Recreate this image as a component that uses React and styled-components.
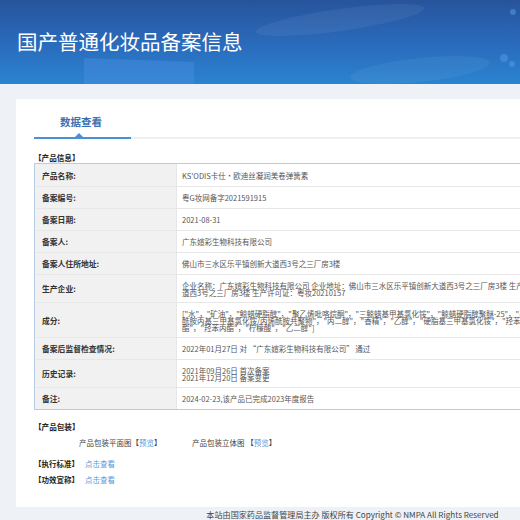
import React from "react";
import styled, { createGlobalStyle } from "styled-components";

const GlobalStyle = createGlobalStyle`
  html, body {
    margin: 0;
    padding: 0;
    overflow: hidden;
    background: #eef2f6;
  }
  body {
    font-family: "Noto Sans CJK SC", "Noto Sans", sans-serif;
  }
`;

const Page = styled.div`
  width: 705px;
  background: #eef2f6;
`;

const Banner = styled.header`
  position: relative;
  height: 84px;
  background: linear-gradient(180deg, #27549c 0%, #2a6cbd 55%, #2a84d0 100%);
  overflow: hidden;
`;

const BannerDecor = styled.svg`
  position: absolute;
  left: 0;
  top: 0;
`;

const Title = styled.h1`
  position: relative;
  margin: 0;
  padding: 29px 0 0 17px;
  font-size: 20.5px;
  line-height: 24px;
  font-weight: 400;
  color: #ffffff;
`;

const Main = styled.main`
  padding: 15px 16px 0 16px;
`;

const Card = styled.section`
  background: #ffffff;
  padding: 0 0 22px 18px;
  overflow: hidden;
`;

const TabBar = styled.div`
  display: flex;
  height: 38px;
  border-bottom: 2px solid #eef0f3;
`;

const Tab = styled.div`
  position: relative;
  width: 97px;
  box-sizing: border-box;
  padding-left: 26px;
  display: flex;
  align-items: center;
  padding-top: 6px;
  margin-bottom: -2px;
  border-bottom: 2px solid #4b8fd6;
  font-size: 10.5px;
  font-weight: 700;
  color: #3f6fae;

  &::after {
    content: "";
    position: absolute;
    left: 41px;
    bottom: 0;
    border-left: 4px solid transparent;
    border-right: 4px solid transparent;
    border-bottom: 4px solid #4b8fd6;
  }
`;

const SectionTitle = styled.div`
  margin-top: ${p => p.$top}px;
  font-size: 7.6px;
  line-height: 10px;
  font-weight: 700;
  color: #222;
`;

const InfoTable = styled.div`
  width: 640px;
  border: 1px solid #b7cde6;
`;

const Row = styled.div`
  display: grid;
  grid-template-columns: 141px 1fr;
  min-height: 21px;
  border-top: 1px solid #e7e7e7;

  &:first-child {
    border-top: none;
    min-height: 22px;
  }
`;

const Label = styled.div`
  display: flex;
  align-items: center;
  padding: 0 7px;
  background: #f1f1f1;
  font-size: 7.8px;
  font-weight: 700;
  color: #333;
`;

const Value = styled.div`
  display: flex;
  flex-direction: column;
  justify-content: center;
  padding: 6.5px 5px;
  border-left: 1px solid #e7e7e7;
  font-size: 7.5px;
  line-height: 7px;
  color: #555;
  white-space: nowrap;
`;

const Line = styled.span`
  display: block;
`;

const PackRow = styled.div`
  display: flex;
  margin-top: 6px;
  padding-left: 45px;
  font-size: 7.5px;
  line-height: 10px;
  color: #444;
`;

const PackItem = styled.span`
  width: 113px;
`;

const LinkText = styled.a`
  color: #5b9ad8;
  text-decoration: none;
`;

const LinkRow = styled.div`
  margin-top: ${p => p.$top}px;
  font-size: 7.5px;
  line-height: 10px;
  color: #222;

  b {
    font-weight: 700;
    margin-right: 6px;
  }
`;

const Footer = styled.footer`
  padding: 3px 0 6px 0;
  text-align: center;
  font-size: 8.1px;
  line-height: 10px;
  color: #444;
`;

const rows = [
  { label: "产品名称:", lines: ["KS'ODIS卡仕·欧迪丝凝润美卷弹簧素"] },
  { label: "备案编号:", lines: ["粤G妆网备字2021591915"] },
  { label: "备案日期:", lines: ["2021-08-31"] },
  { label: "备案人:", lines: ["广东媗彩生物科技有限公司"] },
  { label: "备案人住所地址:", lines: ["佛山市三水区乐平镇创新大道西3号之三厂房3楼"] },
  {
    label: "生产企业:",
    lines: [
      "企业名称：广东媗彩生物科技有限公司 企业地址：佛山市三水区乐平镇创新大道西3号之三厂房3楼 生产地址：佛山市三水区乐平镇创新大",
      "道西3号之三厂房3楼 生产许可证：粤妆20210157",
    ],
  },
  {
    label: "成分:",
    lines: [
      "[\"水\"，\"矿油\"，\"鲸蜡硬脂醇\"，\"聚乙烯吡咯烷酮\"，\"三鲸蜡基甲基氯化铵\"，\"鲸蜡硬脂醇聚醚-25\"，\"丙烯",
      "酰胺丙基三甲基氯化铵/丙烯酰胺共聚物\"，\"丙二醇\"，\"香精\"，\"乙醇\"，\"硬脂基三甲基氯化铵\"，\"羟苯甲",
      "酯\"，\"羟苯丙酯\"，\"柠檬酸\"，\"乙二醇\"]",
    ],
  },
  { label: "备案后监督检查情况:", lines: ["2022年01月27日 对 “广东媗彩生物科技有限公司” 通过"] },
  { label: "历史记录:", lines: ["2021年09月26日 首次备案", "2021年12月20日 备案变更"] },
  { label: "备注:", lines: ["2024-02-23,该产品已完成2023年度报告"] },
];

const Decor = () => (
  <BannerDecor width="705" height="84" viewBox="0 0 705 84">
    <path d="M84 58 L194 62 L194 84 L84 84 Z" fill="#4a8ee0" opacity="0.45" />
    <ellipse cx="340" cy="20" rx="85" ry="11" transform="rotate(-8 340 20)" fill="#ffffff" opacity="0.06" />
    <ellipse cx="420" cy="70" rx="70" ry="12" transform="rotate(-6 420 70)" fill="#ffffff" opacity="0.05" />
    <circle cx="513" cy="12" r="3" fill="#5aa0ea" opacity="0.5" />
    <circle cx="504" cy="58" r="4" fill="#5aa0ea" opacity="0.45" />
    <circle cx="512" cy="64" r="3" fill="#5aa0ea" opacity="0.45" />
  </BannerDecor>
);

export default function App() {
  return (
    <Page>
      <GlobalStyle />
      <Banner>
        <Decor />
        <Title>国产普通化妆品备案信息</Title>
      </Banner>
      <Main>
        <Card>
          <TabBar>
            <Tab>数据查看</Tab>
          </TabBar>
          <SectionTitle $top={14}>【产品信息】</SectionTitle>
          <InfoTable>
            {rows.map(r => (
              <Row key={r.label}>
                <Label>{r.label}</Label>
                <Value>
                  {r.lines.map((l, i) => (
                    <Line key={i}>{l}</Line>
                  ))}
                </Value>
              </Row>
            ))}
          </InfoTable>
          <SectionTitle $top={12}>【产品包装】</SectionTitle>
          <PackRow>
            <PackItem>
              产品包装平面图【<LinkText href="#">预览</LinkText>】
            </PackItem>
            <PackItem>
              产品包装立体图 【<LinkText href="#">预览</LinkText>】
            </PackItem>
          </PackRow>
          <LinkRow $top={11}>
            <b>【执行标准】</b>
            <LinkText href="#">点击查看</LinkText>
          </LinkRow>
          <LinkRow $top={6}>
            <b>【功效宣称】</b>
            <LinkText href="#">点击查看</LinkText>
          </LinkRow>
        </Card>
      </Main>
      <Footer>本站由国家药品监督管理局主办 版权所有 Copyright © NMPA All Rights Reserved</Footer>
    </Page>
  );
}
